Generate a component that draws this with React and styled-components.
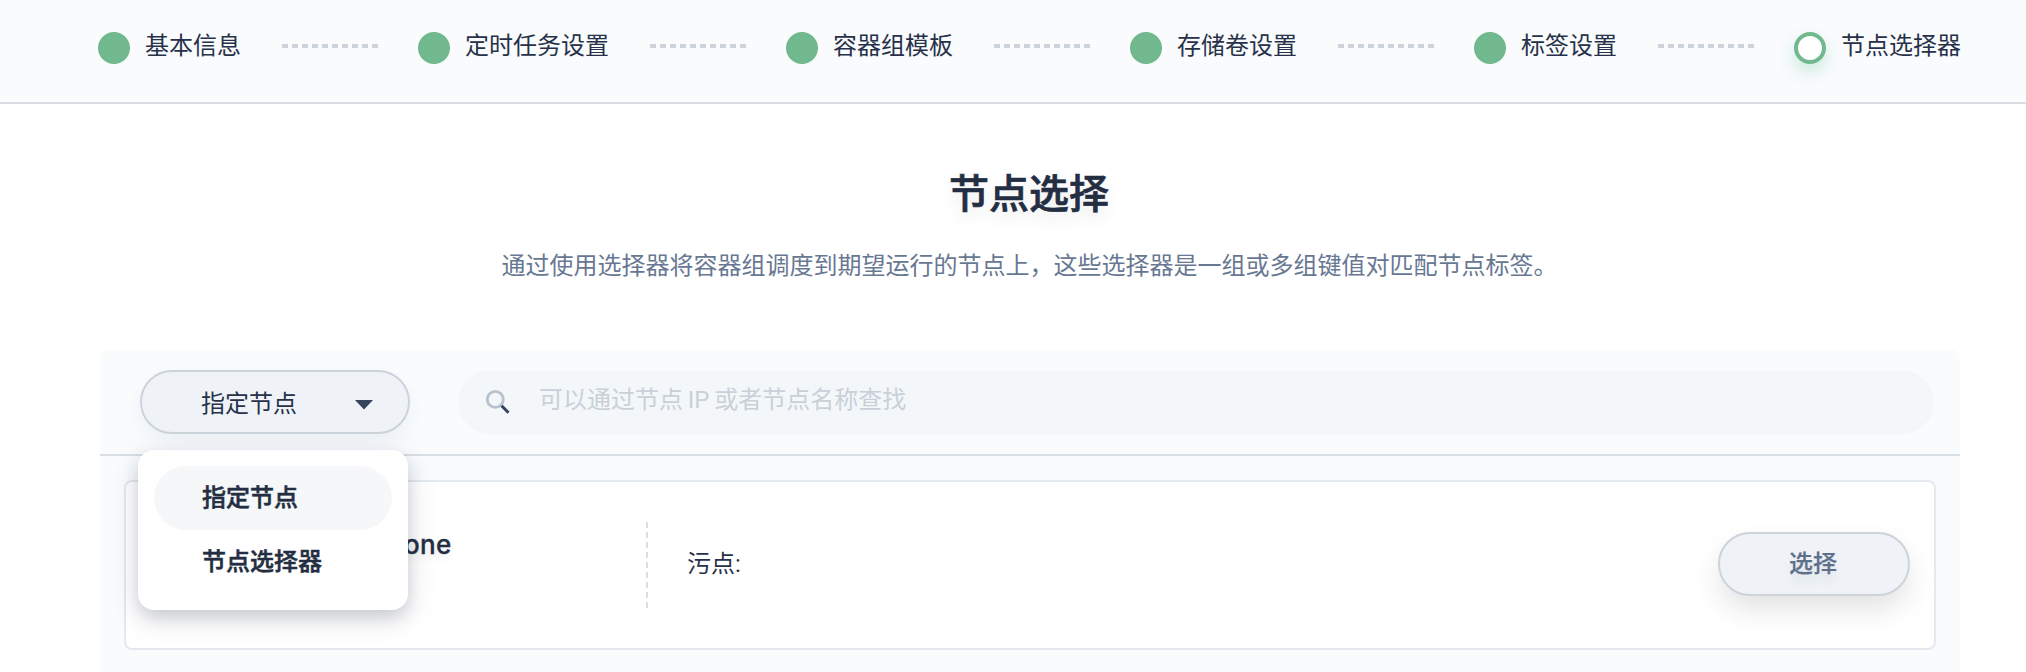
import React from "react";
import styled, { createGlobalStyle, css } from "styled-components";

const GlobalStyle = createGlobalStyle`
  * { box-sizing: border-box; }
  body {
    margin: 0;
    background: #ffffff;
    color: #273149;
    font-family: Roboto, "Noto Sans CJK SC", sans-serif;
    font-size: 24px;
    line-height: 36px;
  }
`;

const Page = styled.div`
  height: 672px;
  overflow: hidden;
`;

const StepBar = styled.header`
  display: flex;
  gap: 40px;
  height: 104px;
  padding: 28px 0 0 98px;
  background: #f9fbfd;
  border-bottom: 2px solid #d8dee3;
`;

const Step = styled.div`
  display: flex;
  align-items: flex-start;
  gap: 15px;
  padding-right: 1px;
  white-space: nowrap;
`;

const StepDot = styled.span`
  width: 32px;
  height: 32px;
  margin-top: 4px;
  border: 4px solid #72b88f;
  border-radius: 50%;
  background: #72b88f;
  ${(p) =>
    p.$current &&
    css`
      background: #ffffff;
      box-shadow: 0 8px 16px 0 rgba(85, 188, 138, 0.26);
    `}
`;

const StepLabel = styled.span`
  height: 36px;
`;

const Connector = styled.span`
  width: 96px;
  height: 4px;
  margin-top: 16px;
  background: repeating-linear-gradient(to right, #ccd3da 0 6px, transparent 6px 10px);
`;

const Content = styled.main`
  width: 1860px;
  margin-left: 100px;
`;

const Heading = styled.h1`
  margin: 0;
  padding: 61px 2px 0 0;
  color: #242e42;
  font-size: 40px;
  font-weight: 500;
  line-height: 60px;
  text-align: center;
  text-shadow: 0 8px 16px rgba(36, 46, 66, 0.1);
  -webkit-text-stroke: 0.7px currentColor;
`;

const Description = styled.p`
  margin: 0;
  padding: 23px 1px 0 0;
  height: 125px;
  color: #687892;
  text-align: center;
`;

const Panel = styled.section`
  height: 340px;
  background: #f9fbfd;
  border-radius: 8px 8px 0 0;
`;

const Toolbar = styled.div`
  display: flex;
  gap: 48px;
  height: 106px;
  padding: 20px 26px 0 40px;
  border-bottom: 2px solid #d8dfe5;
`;

const SelectWrap = styled.div`
  position: relative;
  width: 270px;
`;

const SelectButton = styled.div`
  display: flex;
  align-items: center;
  justify-content: space-between;
  height: 64px;
  padding: 3px 35px 0 59px;
  border: 2px solid #ccd3da;
  border-radius: 32px;
  background: #eff3f8;
  box-shadow: 0 8px 16px 0 rgba(200, 215, 228, 0.26);

  svg { margin-top: 2px; }
`;

const Menu = styled.div`
  position: absolute;
  z-index: 2;
  top: 80px;
  left: -2px;
  width: 270px;
  height: 160px;
  padding: 16px;
  border-radius: 16px;
  background: #ffffff;
  box-shadow: 0 8px 32px 0 rgba(36, 46, 66, 0.12), 0 8px 16px 0 rgba(36, 46, 66, 0.16);
`;

const MenuItem = styled.div`
  height: 64px;
  padding: 14px 48px;
  border-radius: 32px;
  background: ${(p) => (p.$active ? "#f5f7f9" : "transparent")};
  color: #242e42;
  font-weight: 500;
  white-space: nowrap;
  -webkit-text-stroke: 0.5px currentColor;
`;

const SearchBox = styled.div`
  display: flex;
  flex: 1;
  align-items: flex-start;
  gap: 28px;
  height: 64px;
  padding: 12px 28px;
  border-radius: 32px;
  background: #f3f7fa;
  color: #c9d0d8;
  word-spacing: -1.2px;

  svg { margin-top: 8px; }
`;

const NodeCard = styled.article`
  display: flex;
  align-items: center;
  height: 170px;
  margin: 24px 24px 0;
  padding: 0 24px 0 0;
  border: 2px solid #e3e9ee;
  border-radius: 8px;
  background: #ffffff;
`;

const NodeName = styled.strong`
  width: 520px;
  padding-left: 278px;
  margin-top: -40px;
  color: #242e42;
  font-family: Inter, sans-serif;
  font-size: 26px;
  font-weight: 500;
  letter-spacing: 0.3px;
  text-shadow: 0 4px 8px rgba(36, 46, 66, 0.1);
  -webkit-text-stroke: 0.3px currentColor;
`;

const Divider = styled.span`
  width: 2px;
  height: 86px;
  background: repeating-linear-gradient(to bottom, #d8dee3 0 6px, transparent 6px 10px);
`;

const Taints = styled.span`
  flex: 1;
  margin-top: -2px;
  padding-left: 39px;
`;

const ChooseButton = styled.button`
  width: 192px;
  height: 64px;
  margin-top: -2px;
  padding: 0 2px 0 0;
  border: 2px solid #ccd3da;
  border-radius: 32px;
  background: #eff3f8;
  box-shadow: 0 14px 28px -2px rgba(36, 46, 46, 0.14);
  color: #5f708a;
  font: inherit;
  font-weight: 500;
  text-shadow: 0 8px 8px rgba(36, 46, 66, 0.08);
  -webkit-text-stroke: 0.2px currentColor;
`;

const steps = ["基本信息", "定时任务设置", "容器组模板", "存储卷设置", "标签设置", "节点选择器"];

function CaretIcon() {
  return (
    <svg width="18" height="10" viewBox="0 0 18 10">
      <path d="M0 0H18L9 9.5Z" fill="#36435c" />
    </svg>
  );
}

function SearchIcon() {
  return (
    <svg width="25" height="25" viewBox="0 0 25 25" fill="none">
      <circle cx="9.3" cy="9.4" r="8" stroke="#b6c2cd" strokeWidth="2.8" />
      <path d="M15.6 15.8L22.5 22.7" stroke="#36435c" strokeWidth="3" />
    </svg>
  );
}

export default function App() {
  return (
    <Page>
      <GlobalStyle />
      <StepBar>
        {steps.map((label, i) => (
          <React.Fragment key={label}>
            {i > 0 && <Connector />}
            <Step>
              <StepDot $current={i === steps.length - 1} />
              <StepLabel>{label}</StepLabel>
            </Step>
          </React.Fragment>
        ))}
      </StepBar>
      <Content>
        <Heading>节点选择</Heading>
        <Description>
          通过使用选择器将容器组调度到期望运行的节点上，这些选择器是一组或多组键值对匹配节点标签。
        </Description>
        <Panel>
          <Toolbar>
            <SelectWrap>
              <SelectButton>
                <span>指定节点</span>
                <CaretIcon />
              </SelectButton>
              <Menu>
                <MenuItem $active>指定节点</MenuItem>
                <MenuItem>节点选择器</MenuItem>
              </Menu>
            </SelectWrap>
            <SearchBox>
              <SearchIcon />
              <span>可以通过节点 IP 或者节点名称查找</span>
            </SearchBox>
          </Toolbar>
          <NodeCard>
            <NodeName>one</NodeName>
            <Divider />
            <Taints>污点:</Taints>
            <ChooseButton>选择</ChooseButton>
          </NodeCard>
        </Panel>
      </Content>
    </Page>
  );
}
